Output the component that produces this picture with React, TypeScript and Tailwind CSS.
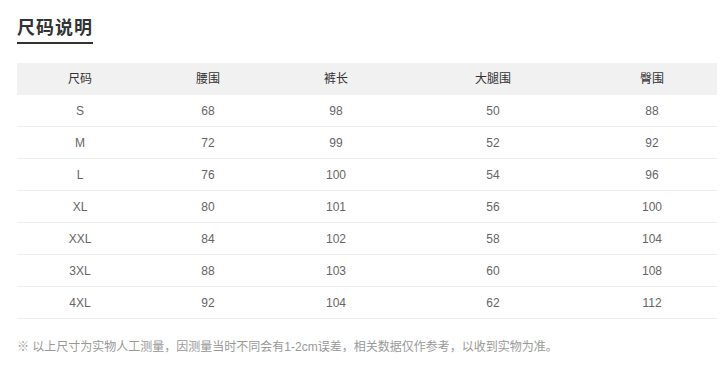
const headers = ["尺码", "腰围", "裤长", "大腿围", "臀围"];
const widths = ["w-[126px]", "w-[130px]", "w-[126px]", "w-[188px]", "w-[130px]"];

const rows = [
  ["S", "68", "98", "50", "88"],
  ["M", "72", "99", "52", "92"],
  ["L", "76", "100", "54", "96"],
  ["XL", "80", "101", "56", "100"],
  ["XXL", "84", "102", "58", "104"],
  ["3XL", "88", "103", "60", "108"],
  ["4XL", "92", "104", "62", "112"],
];

export default function App() {
  return (
    <div
      className="h-[374px] w-[726px] bg-white pl-[17px] pt-[17px]"
      style={{ fontFamily: '"Liberation Sans", "Noto Sans CJK SC", sans-serif' }}
    >
      <div className="flex">
        <h2 className="border-b-2 border-[#333] pb-[3px] text-[18px] font-bold leading-[22px] tracking-[1px] text-[#333]">
          尺码说明
        </h2>
      </div>
      <div className="mt-[19px] w-[700px] text-[12px]">
        <div className="flex h-[32px] items-center bg-[#f1f1f1] text-[#333]">
          {headers.map((h, i) => (
            <div key={h} className={`${widths[i]} text-center`}>
              {h}
            </div>
          ))}
        </div>
        {rows.map((row) => (
          <div
            key={row[0]}
            className="flex h-[32px] items-center border-b border-[#eeeeee] text-[#666]"
          >
            {row.map((cell, i) => (
              <div key={i} className={`${widths[i]} text-center`}>
                {cell}
              </div>
            ))}
          </div>
        ))}
      </div>
      <p className="mt-[20px] text-[12px] leading-[16px] text-[#999]">
        ※ 以上尺寸为实物人工测量，因测量当时不同会有1-2cm误差，相关数据仅作参考，以收到实物为准。
      </p>
    </div>
  );
}
